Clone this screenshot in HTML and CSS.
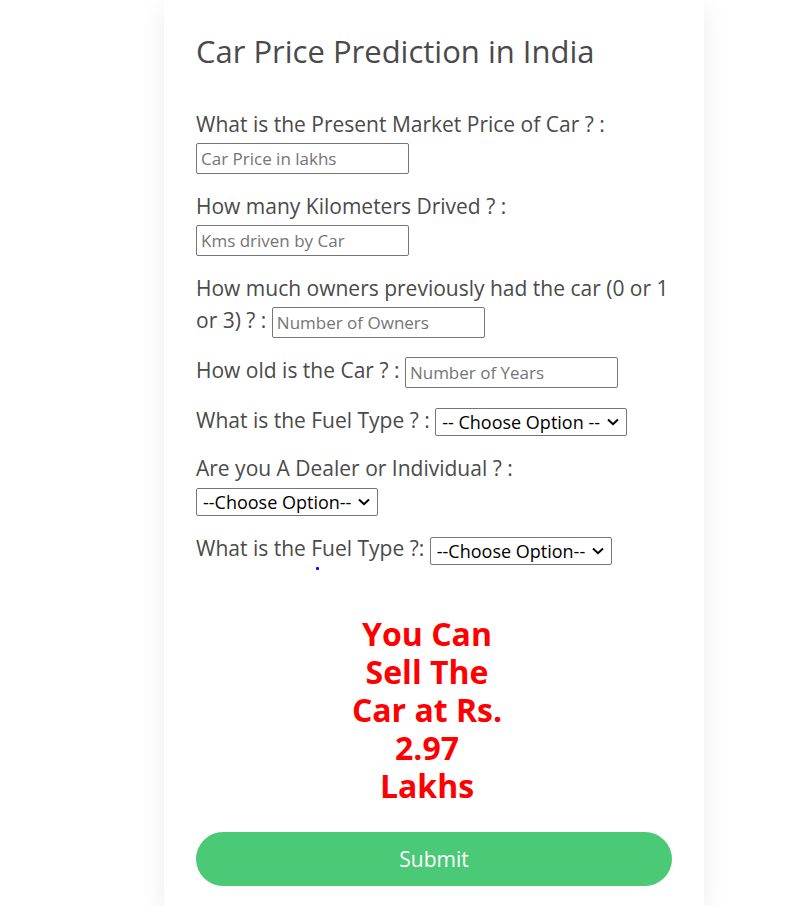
FILE: index.html
```html
<!DOCTYPE html>
<html lang="en">
<head>
<meta charset="utf-8">
<title>Car Price Prediction</title>
<link rel="stylesheet" href="styles.css">
</head>
<body>
<main class="card">
<form class="form">
<h1 class="title">Car Price Prediction in India</h1>
<div class="field"><label for="price">What is the Present Market Price of Car ? :</label><br><input class="input" id="price" type="text" placeholder="Car Price in lakhs"></div>
<div class="field"><label for="kms">How many Kilometers Drived ? :</label><br><input class="input" id="kms" type="text" placeholder="Kms driven by Car"></div>
<div class="field"><label for="owners">How much owners previously had the car (0 or 1 or 3) ? :</label> <input class="input" id="owners" type="text" placeholder="Number of Owners"></div>
<div class="field"><label for="years">How old is the Car ? :</label> <input class="input" id="years" type="text" placeholder="Number of Years"></div>
<div class="field"><label for="fuel">What is the Fuel Type ? :</label> <span class="picker"><select class="select wide" id="fuel"><option>-- Choose Option --</option></select><svg class="chevron" viewBox="0 0 12 8" aria-hidden="true"><path d="M1 1.5 6 6.2 11 1.5"/></svg></span></div>
<div class="field"><label for="seller">Are you A Dealer or Individual ? :</label><br><span class="picker"><select class="select" id="seller"><option>--Choose Option--</option></select><svg class="chevron" viewBox="0 0 12 8" aria-hidden="true"><path d="M1 1.5 6 6.2 11 1.5"/></svg></span></div>
<div class="field"><label for="gear">What is the Fuel Type ?:</label> <span class="picker"><select class="select" id="gear"><option>--Choose Option--</option></select><svg class="chevron" viewBox="0 0 12 8" aria-hidden="true"><path d="M1 1.5 6 6.2 11 1.5"/></svg></span><span class="dot"></span></div>
<h2 class="result">You Can Sell The Car at Rs. 2.97 Lakhs</h2>
<button class="submit" type="button">Submit</button>
</form>
</main>
</body>
</html>
```
FILE: styles.css
```css
* { box-sizing: border-box; }
body {
  margin: 0;
  background: #fff;
  color: #4a4a4a;
  font: 21px/32px "Open Sans", "Noto Sans", sans-serif;
}
.card {
  width: 68%;
  max-width: 540px;
  min-height: 100vh;
  margin-left: 164px;
  padding: 31px 32px 20px;
  box-shadow: 0 8px 24px rgba(0, 0, 0, .08);
}
.title { margin: 0 0 37px; font-size: 31px; line-height: 40px; font-weight: 400; }
.field { position: relative; margin-bottom: 16px; }
.input, .select {
  border: 1px solid #767676;
  border-radius: 2px;
  background: #fff;
  font-family: inherit;
  vertical-align: middle;
}
.input { width: 213px; height: 31px; padding: 1px 4px; font-size: 17px; }
.input::placeholder { color: #757575; }
.picker { position: relative; display: inline-block; height: 28px; line-height: 28px; vertical-align: middle; }
.select {
  display: block;
  width: 182px;
  height: 28px;
  padding: 0 6px;
  appearance: none;
  color: #000;
  font-size: 18px;
  line-height: 26px;
}
.wide { width: 192px; }
.chevron {
  position: absolute;
  right: 8px;
  top: 10px;
  width: 12px;
  height: 8px;
  fill: none;
  stroke: #000;
  stroke-width: 2;
  pointer-events: none;
}
.dot {
  position: absolute;
  left: 120px;
  bottom: -5px;
  width: 3px;
  height: 3px;
  border-radius: 1px;
  background: #10f;
}
.result {
  width: 174px;
  margin: 50px auto 27px;
  padding-right: 14px;
  color: #f00;
  font-size: 32px;
  line-height: 38px;
  text-align: center;
}
.submit {
  display: block;
  width: 100%;
  height: 54px;
  border: 0;
  border-radius: 27px;
  background: #4ac976;
  color: #fff;
  font: inherit;
}
```
